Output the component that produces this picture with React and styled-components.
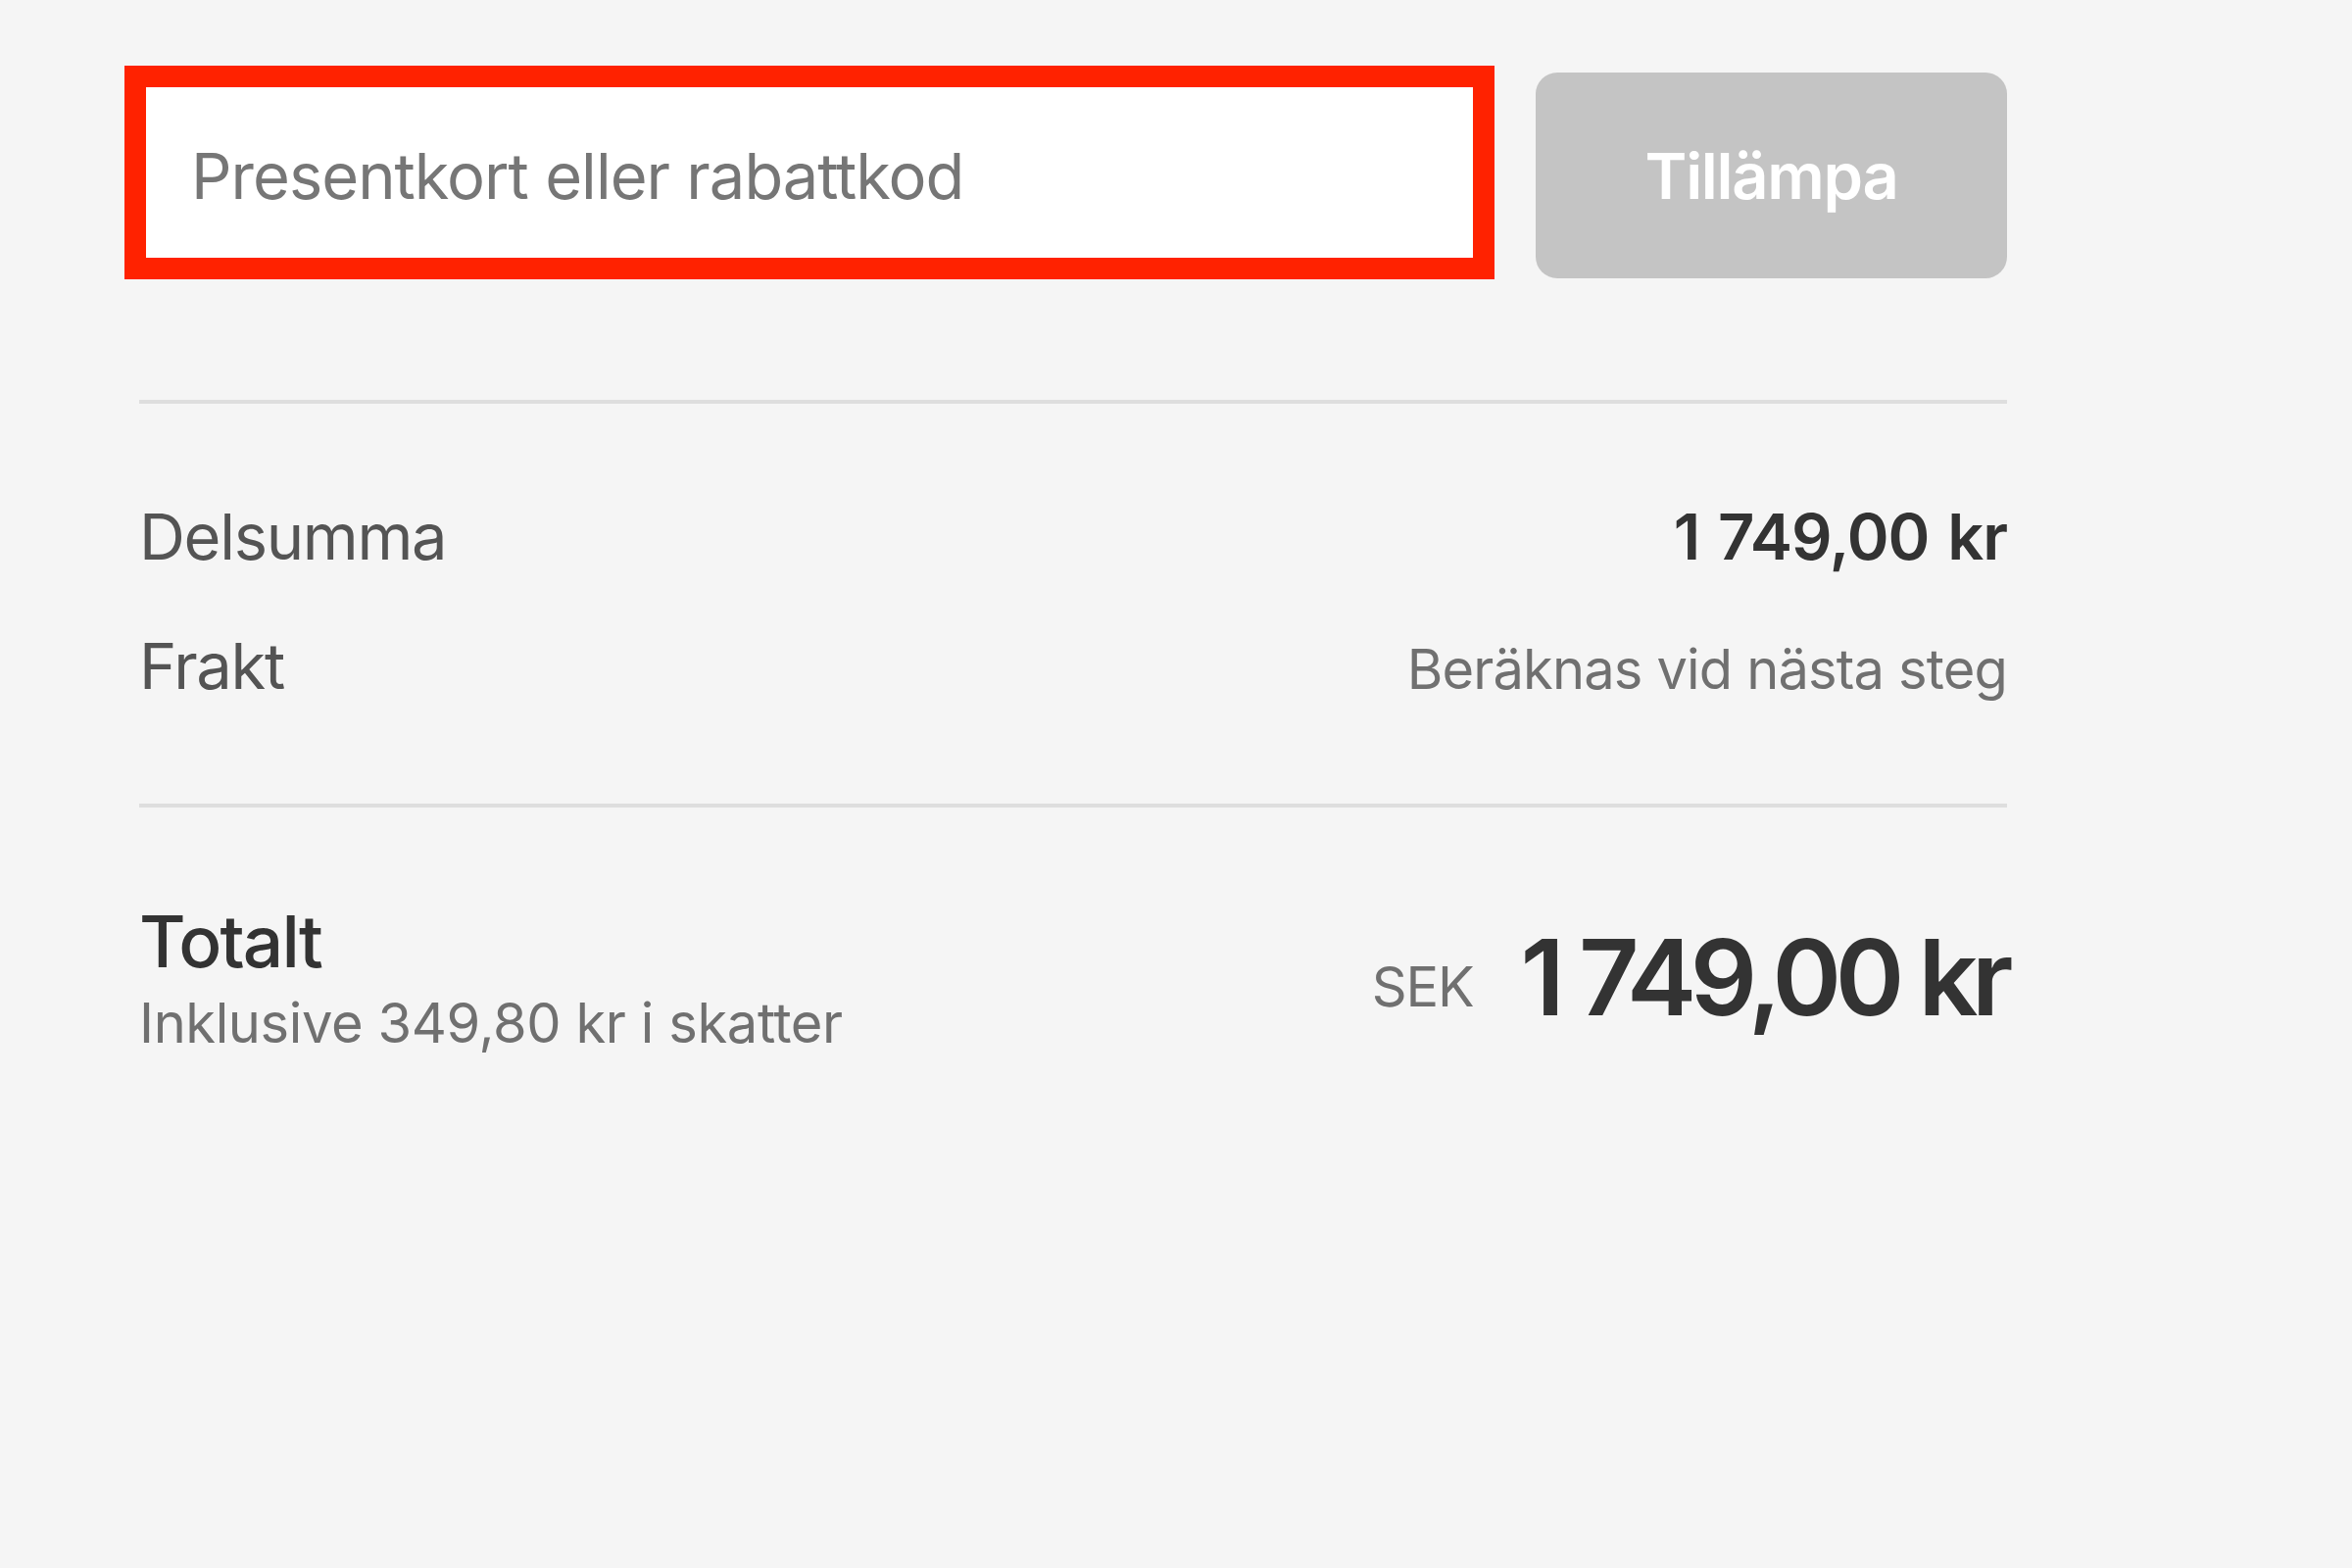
import React from "react";
import styled, { createGlobalStyle } from "styled-components";

const GlobalStyle = createGlobalStyle`
  html, body {
    margin: 0;
    padding: 0;
    background: #f5f5f5;
  }
  body {
    font-family: Inter, "Noto Sans", "Liberation Sans", sans-serif;
    -webkit-font-smoothing: antialiased;
  }
  * { box-sizing: border-box; }
`;

const Page = styled.div`
  width: 2400px;
  min-height: 1600px;
  background: #f5f5f5;
  padding: 67px 0 0 142px;
`;

const Summary = styled.section`
  width: 1906px;
  display: flex;
  flex-direction: column;
`;

const DiscountRow = styled.div`
  display: flex;
  align-items: flex-start;
  gap: 42px;
  margin-left: -15px;
`;

const CodeInput = styled.input`
  flex: 1;
  min-width: 0;
  height: 218px;
  border: 22px solid #ff2200;
  background: #ffffff;
  padding: 6px 0 0 46px;
  font-family: inherit;
  font-size: 65px;
  letter-spacing: -0.015em;
  color: #333;
  outline: none;
  &::placeholder {
    color: #767676;
    opacity: 1;
  }
`;

const ApplyButton = styled.button`
  width: 481px;
  height: 210px;
  margin-top: 7px;
  border: none;
  border-radius: 22px;
  background: #c4c4c4;
  color: #ffffff;
  font-family: inherit;
  font-size: 65px;
  font-weight: 600;
  letter-spacing: -0.02em;
  padding: 0;
  cursor: default;
`;

const Divider = styled.hr`
  border: none;
  height: 4px;
  background: #dedede;
  margin: ${(p) => p.$top}px 0 0 0;
`;

const Lines = styled.div`
  display: flex;
  flex-direction: column;
  gap: 33px;
  padding: 86px 0 87px;
`;

const Line = styled.div`
  display: flex;
  justify-content: space-between;
  align-items: baseline;
  line-height: 99px;
`;

const Label = styled.span`
  font-size: 65px;
  letter-spacing: -0.02em;
  color: #545454;
`;

const Amount = styled.span`
  font-size: 65px;
  font-weight: 600;
  letter-spacing: -0.015em;
  word-spacing: 0.05em;
  color: #333333;
`;

const Note = styled.span`
  font-size: 56px;
  letter-spacing: ${(p) => (p.$loose ? "-0.007em" : "-0.015em")};
  line-height: ${(p) => (p.$loose ? 1.2 : "inherit")};
  color: #707070;
`;

const TotalRow = styled.div`
  display: flex;
  justify-content: space-between;
  align-items: center;
  padding-top: 93px;
`;

const TotalLeft = styled.div`
  display: flex;
  flex-direction: column;
  gap: 6px;
`;

const TotalLabel = styled.span`
  font-size: 73px;
  line-height: 1.2;
  font-weight: 500;
  letter-spacing: -0.025em;
  color: #333333;
`;

const TotalRight = styled.div`
  display: flex;
  align-items: flex-end;
  gap: 48px;
`;

const Currency = styled.span`
  font-size: 56px;
  line-height: 1;
  letter-spacing: -0.02em;
  color: #707070;
  margin-bottom: 16px;
`;

const BigTotal = styled.span`
  font-size: 107px;
  line-height: 1;
  font-weight: 600;
  letter-spacing: -0.06em;
  color: #333333;
`;

export default function App() {
  return (
    <>
      <GlobalStyle />
      <Page>
        <Summary>
          <DiscountRow>
            <CodeInput type="text" placeholder="Presentkort eller rabattkod" />
            <ApplyButton type="button">Tillämpa</ApplyButton>
          </DiscountRow>
          <Divider $top={123} />
          <Lines>
            <Line>
              <Label>Delsumma</Label>
              <Amount>1 749,00 kr</Amount>
            </Line>
            <Line>
              <Label>Frakt</Label>
              <Note>Beräknas vid nästa steg</Note>
            </Line>
          </Lines>
          <Divider $top={0} />
          <TotalRow>
            <TotalLeft>
              <TotalLabel>Totalt</TotalLabel>
              <Note $loose>Inklusive 349,80 kr i skatter</Note>
            </TotalLeft>
            <TotalRight>
              <Currency>SEK</Currency>
              <BigTotal>1 749,00 kr</BigTotal>
            </TotalRight>
          </TotalRow>
        </Summary>
      </Page>
    </>
  );
}
